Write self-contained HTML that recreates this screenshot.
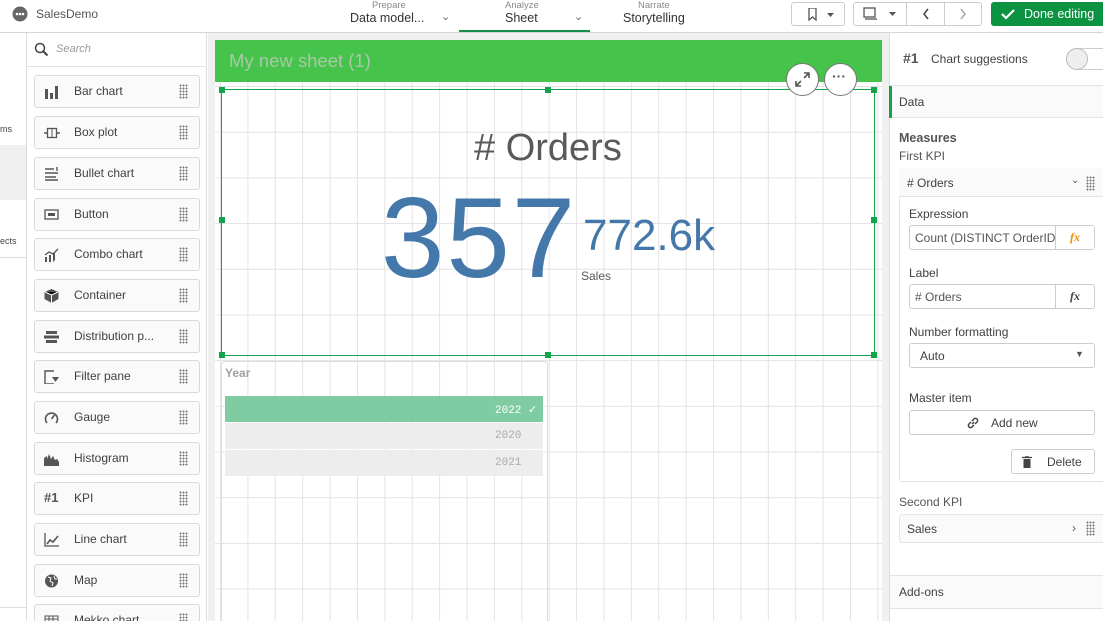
<!DOCTYPE html>
<html><head><meta charset="utf-8"><style>
*{box-sizing:border-box;margin:0;padding:0}
html{width:1103px;height:621px;overflow:hidden}
body{width:1103px;height:621px;overflow:hidden;position:relative;background:#fff;font-family:"Liberation Sans",sans-serif;color:#404040}
.a{position:absolute}
.hdr{left:0;top:0;width:1103px;height:33px;border-bottom:1px solid #d6d6d6;background:#fff}
.item{position:absolute;left:34px;width:166px;height:33px;border:1px solid #d9d9d9;border-radius:3px;background:#fafafa;font-size:12px;color:#404040}
.item span.l{position:absolute;left:39px;top:8px}
.item .ic{position:absolute;left:9px;top:9px;width:16px;height:14px}
.item .dr{position:absolute;right:11px;top:8px;width:9px;height:15px;background-image:radial-gradient(circle,#777 0.9px,transparent 1.1px);background-size:3px 3px}
.grid{left:215px;top:82px;width:667px;height:539px;background-color:#fff;background-image:linear-gradient(90deg,#e3e3e3 1px,transparent 1px),linear-gradient(#e3e3e3 1px,transparent 1px);background-size:27.4px 45.7px;background-position:5px 4px}
.h{position:absolute;width:6px;height:6px;background:#10a54a}
.lbl{font-size:12px;color:#404040;position:absolute}
.box{position:absolute;border:1px solid #ccc;border-radius:3px;background:#fff;font-size:12px}
</style></head><body>
<div class="a hdr">
 <svg class="a" style="left:12px;top:6px" width="16" height="16"><circle cx="8" cy="8" r="7.5" fill="#666"/><circle cx="5" cy="8" r="1.3" fill="#fff"/><circle cx="8" cy="8" r="1.3" fill="#fff"/><circle cx="11" cy="8" r="1.3" fill="#fff"/></svg>
 <div class="a" style="left:36px;top:7px;font-size:12px;color:#555">SalesDemo</div>
 <div class="a" style="left:372px;top:0;font-size:9.5px;color:#888">Prepare</div>
 <div class="a" style="left:350px;top:11px;font-size:12.5px;color:#333">Data model...</div>
 <div class="a" style="left:441px;top:10px;font-size:11px;color:#666">⌄</div>
 <div class="a" style="left:505px;top:0;font-size:9.5px;color:#888">Analyze</div>
 <div class="a" style="left:505px;top:11px;font-size:12.5px;color:#333">Sheet</div>
 <div class="a" style="left:574px;top:10px;font-size:11px;color:#666">⌄</div>
 <div class="a" style="left:459px;top:30px;width:131px;height:2px;background:#148f47"></div>
 <div class="a" style="left:638px;top:0;font-size:9.5px;color:#888">Narrate</div>
 <div class="a" style="left:623px;top:11px;font-size:12.5px;color:#333">Storytelling</div>
 <div class="a" style="left:791px;top:2px;width:54px;height:24px;border:1px solid #ccc;border-radius:3px"></div>
 <svg class="a" style="left:808px;top:8px" width="30" height="13"><path d="M1 0h7v12l-3.5-3-3.5 3z" fill="none" stroke="#555" stroke-width="1.3"/><path d="M19 5h7l-3.5 4z" fill="#555"/></svg>
 <div class="a" style="left:853px;top:2px;width:129px;height:24px;border:1px solid #ccc;border-radius:3px"></div>
 <div class="a" style="left:906px;top:2px;width:1px;height:24px;background:#ccc"></div>
 <div class="a" style="left:944px;top:2px;width:1px;height:24px;background:#ccc"></div>
 <svg class="a" style="left:863px;top:7px" width="110" height="14"><rect x="1" y="1" width="11" height="9" fill="none" stroke="#555" stroke-width="1.3"/><path d="M2 12h12" stroke="#555" stroke-width="1.3"/><path d="M26 5h7l-3.5 4z" fill="#555"/><path d="M65 2l-4 5 4 5" fill="none" stroke="#444" stroke-width="1.5"/><path d="M98 2l4 5-4 5" fill="none" stroke="#aaa" stroke-width="1.5"/></svg>
 <div class="a" style="left:991px;top:2px;width:112px;height:24px;background:#0b9341;border-radius:3px 0 0 3px;color:#fff;font-size:12.5px;padding:5px 0 0 33px">Done editing</div>
 <svg class="a" style="left:1001px;top:8px" width="14" height="12"><path d="M1 6l4 4 8-8" fill="none" stroke="#fff" stroke-width="2.2"/></svg>
</div>
<div class="a" style="left:0;top:33px;width:27px;height:588px;border-right:1px solid #ddd;background:#fff"></div>
<div class="a" style="left:0;top:145px;width:26px;height:55px;background:#f0f0f0"></div>
<div class="a" style="left:0;top:124px;font-size:9px;color:#444">ms</div>
<div class="a" style="left:0;top:236px;font-size:9px;color:#444">ects</div>
<div class="a" style="left:0;top:257px;width:26px;height:1px;background:#ddd"></div>
<div class="a" style="left:0;top:607px;width:26px;height:1px;background:#ddd"></div>
<div class="a" style="left:27px;top:33px;width:180px;height:588px;background:#fff;border-right:1px solid #ddd;overflow:hidden"></div>
<div class="a" style="left:27px;top:66px;width:180px;height:1px;background:#e3e3e3"></div>
<svg class="a" style="left:34px;top:42px" width="16" height="16"><circle cx="6" cy="6" r="4.5" fill="none" stroke="#444" stroke-width="1.5"/><path d="M9.5 9.5l4 4" stroke="#444" stroke-width="2"/></svg>
<div class="a" style="left:56px;top:43px;font-size:11px;font-style:italic;color:#999">Search</div>
<div class="item" style="top:75px"><svg class="ic"><rect x="1" y="4" width="3" height="10" fill="#555"/><rect x="6" y="8" width="3" height="6" fill="#555"/><rect x="11" y="1" width="3" height="13" fill="#555"/></svg><span class="l">Bar chart</span><i class="dr"></i></div>
<div class="item" style="top:116px"><svg class="ic"><path d="M0 7h3M13 7h3" stroke="#555" stroke-width="1.5"/><rect x="3.5" y="2.5" width="9" height="9" fill="none" stroke="#555" stroke-width="1.3"/><path d="M8 2v10" stroke="#555"/></svg><span class="l">Box plot</span><i class="dr"></i></div>
<div class="item" style="top:157px"><svg class="ic"><path d="M1 2h9M1 6h13M1 10h11M1 13h13M13 0v4" stroke="#555" stroke-width="1.4"/></svg><span class="l">Bullet chart</span><i class="dr"></i></div>
<div class="item" style="top:198px"><svg class="ic"><rect x="1" y="2" width="13" height="9" fill="none" stroke="#555" stroke-width="1.3"/><rect x="4" y="5" width="7" height="3" fill="#555"/></svg><span class="l">Button</span><i class="dr"></i></div>
<div class="item" style="top:238px"><svg class="ic"><path d="M1 14V9h2v5M5 14V7h2v7M9 14V5h2v7" fill="#555"/><path d="M1 7l4-3 4 2 5-5" fill="none" stroke="#555" stroke-width="1.3"/></svg><span class="l">Combo chart</span><i class="dr"></i></div>
<div class="item" style="top:279px"><svg class="ic"><path d="M7.5 0l7 3v7l-7 4-7-4V3z" fill="#555"/><path d="M1 3l6.5 3 6.5-3M7.5 6v8" stroke="#fff" stroke-width="1"/></svg><span class="l">Container</span><i class="dr"></i></div>
<div class="item" style="top:320px"><svg class="ic"><rect x="2" y="1" width="11" height="3" fill="#555"/><rect x="0" y="5.5" width="15" height="3" fill="#555"/><rect x="2" y="10" width="11" height="3" fill="#555"/></svg><span class="l">Distribution p...</span><i class="dr"></i></div>
<div class="item" style="top:360px"><svg class="ic"><path d="M10 1H1v13h9" fill="none" stroke="#555" stroke-width="1.4"/><path d="M8 7h7l-3.5 5z" fill="#555"/></svg><span class="l">Filter pane</span><i class="dr"></i></div>
<div class="item" style="top:401px"><svg class="ic"><path d="M3 12A6 6 0 1 1 12 12" fill="none" stroke="#555" stroke-width="1.6"/><path d="M7.5 8l3-4" stroke="#555" stroke-width="1.6"/></svg><span class="l">Gauge</span><i class="dr"></i></div>
<div class="item" style="top:442px"><svg class="ic"><path d="M0 14V6l3-2v3l2-5 2 5 2-3 2 4 2-1 2 3v4z" fill="#555"/></svg><span class="l">Histogram</span><i class="dr"></i></div>
<div class="item" style="top:482px"><span class="a" style="left:9px;top:7px;font-size:13px;font-weight:bold;color:#555">#1</span><span class="l">KPI</span><i class="dr"></i></div>
<div class="item" style="top:523px"><svg class="ic"><path d="M1 0v13h14" fill="none" stroke="#555" stroke-width="1.3"/><path d="M3 11l3-4 3 2 5-6" fill="none" stroke="#555" stroke-width="1.6"/></svg><span class="l">Line chart</span><i class="dr"></i></div>
<div class="item" style="top:564px"><svg class="ic"><circle cx="7.5" cy="7" r="6.5" fill="#555"/><path d="M4 3l3 1-1 3 3 2-1 3M10 2l1 3 2 0" stroke="#fff" stroke-width="1" fill="none"/></svg><span class="l">Map</span><i class="dr"></i></div>
<div class="item" style="top:604px"><svg class="ic"><rect x="1" y="2" width="13" height="11" fill="none" stroke="#555"/><path d="M1 5h13M5 2v11M9 2v11" stroke="#555"/></svg><span class="l">Mekko chart</span><i class="dr"></i></div>
<div class="a" style="left:208px;top:33px;width:681px;height:588px;background:#f0f0f0"></div>
<div class="a" style="left:215px;top:40px;width:667px;height:42px;background:#46c34a"></div>
<div class="a" style="left:229px;top:50px;font-size:18.5px;color:#a9c9a6">My new sheet (1)</div>
<div class="a grid"></div>
<div class="a" style="left:221px;top:89px;width:654px;height:267px;border:1.5px solid #10a54a"></div>
<div class="h" style="left:219px;top:87px"></div><div class="h" style="left:545px;top:87px"></div><div class="h" style="left:871px;top:87px"></div>
<div class="h" style="left:219px;top:217px"></div><div class="h" style="left:871px;top:217px"></div>
<div class="h" style="left:219px;top:352px"></div><div class="h" style="left:545px;top:352px"></div><div class="h" style="left:871px;top:352px"></div>
<div class="a" style="left:786px;top:63px;width:33px;height:33px;border-radius:50%;background:#fff;border:1px solid #777"></div>
<svg class="a" style="left:794px;top:71px" width="17" height="17"><path d="M10 2h5v5M15 2l-5 5M7 15H2v-5M2 15l5-5" fill="none" stroke="#555" stroke-width="1.6"/></svg>
<div class="a" style="left:824px;top:63px;width:33px;height:33px;border-radius:50%;background:#fff;border:1px solid #777"></div>
<div class="a" style="left:832px;top:68px;font-size:14px;font-weight:bold;color:#555">···</div>
<div class="a" style="left:474px;top:127px;font-size:38px;color:#595959">#&nbsp;Orders</div>
<div class="a" style="left:381px;top:182px;font-size:114px;color:#4477aa;line-height:1;letter-spacing:2px">357</div>
<div class="a" style="left:583px;top:214px;font-size:44px;color:#4477aa;line-height:1">772.6k</div>
<div class="a" style="left:581px;top:269px;font-size:12px;color:#595959">Sales</div>
<div class="a" style="left:221px;top:361px;width:327px;height:262px;border:1px solid #ddd;border-radius:4px"></div>
<div class="a" style="left:225px;top:366px;font-size:12px;font-weight:bold;color:#a0a0a0">Year</div>
<div class="a" style="left:225px;top:396px;width:318px;height:26px;background:#80cca2"></div>
<div class="a" style="left:495px;top:403px;font-size:11px;color:#fff;font-family:'Liberation Mono',monospace">2022 ✓</div>
<div class="a" style="left:225px;top:423px;width:318px;height:26px;background:#ededed"></div>
<div class="a" style="left:495px;top:430px;font-size:11px;color:#aaa;font-family:'Liberation Mono',monospace">2020</div>
<div class="a" style="left:225px;top:450px;width:318px;height:26px;background:#ededed"></div>
<div class="a" style="left:495px;top:457px;font-size:11px;color:#aaa;font-family:'Liberation Mono',monospace">2021</div>
<div class="a" style="left:889px;top:33px;width:214px;height:588px;background:#fff;border-left:1px solid #ddd"></div>
<div class="a" style="left:903px;top:50px;font-size:14px;font-weight:bold;color:#555">#1</div>
<div class="a" style="left:931px;top:52px;font-size:12px;color:#404040">Chart suggestions</div>
<div class="a" style="left:1066px;top:48px;width:50px;height:22px;border-radius:11px;background:#fff;border:1px solid #ccc"></div>
<div class="a" style="left:1066px;top:48px;width:22px;height:22px;border-radius:50%;background:#eee;border:1px solid #bbb"></div>
<div class="a" style="left:890px;top:85px;width:213px;height:1px;background:#e3e3e3"></div>
<div class="a" style="left:890px;top:86px;width:213px;height:32px;background:#fafafa;border-bottom:1px solid #e3e3e3"></div>
<div class="a" style="left:889px;top:86px;width:3px;height:32px;background:#10a54a"></div>
<div class="a" style="left:899px;top:95px;font-size:12px">Data</div>
<div class="a" style="left:899px;top:131px;font-size:12.5px;font-weight:bold;color:#555">Measures</div>
<div class="a" style="left:899px;top:149px;font-size:12px;color:#555">First KPI</div>
<div class="a" style="left:899px;top:168px;width:210px;height:314px;border:1px solid #e3e3e3;border-radius:3px;background:#fff"></div>
<div class="a" style="left:899px;top:168px;width:210px;height:29px;border-bottom:1px solid #e3e3e3;background:#fafafa"></div>
<div class="a" style="left:907px;top:176px;font-size:12px">#&nbsp;Orders</div>
<div class="a" style="left:1071px;top:175px;font-size:10px;color:#555">⌄</div>
<div class="a" style="left:1086px;top:176px;width:9px;height:15px;background-image:radial-gradient(circle,#777 0.9px,transparent 1.1px);background-size:3px 3px"></div>
<div class="lbl" style="left:909px;top:207px">Expression</div>
<div class="box" style="left:909px;top:225px;width:186px;height:25px"><span class="a" style="left:5px;top:5px;color:#555">Count (DISTINCT OrderID</span></div>
<div class="a" style="left:1055px;top:226px;width:39px;height:23px;border-left:1px solid #ccc;background:#fff;color:#f08c00;font-style:italic;font-weight:bold;font-size:12px;text-align:center;padding-top:4px;font-family:'Liberation Serif',serif">fx</div>
<div class="lbl" style="left:909px;top:266px">Label</div>
<div class="box" style="left:909px;top:284px;width:186px;height:25px"><span class="a" style="left:5px;top:5px;color:#555">#&nbsp;Orders</span></div>
<div class="a" style="left:1055px;top:285px;width:39px;height:23px;border-left:1px solid #ccc;color:#444;font-style:italic;font-weight:bold;font-size:12px;text-align:center;padding-top:4px;font-family:'Liberation Serif',serif">fx</div>
<div class="lbl" style="left:909px;top:325px">Number formatting</div>
<div class="box" style="left:909px;top:343px;width:186px;height:25px"><span class="a" style="left:10px;top:5px;color:#404040">Auto</span><span class="a" style="left:165px;top:5px;font-size:9px;color:#555">▼</span></div>
<div class="lbl" style="left:909px;top:391px">Master item</div>
<div class="box" style="left:909px;top:410px;width:186px;height:25px"><svg class="a" style="left:56px;top:5px" width="14" height="14"><path d="M6 8l2-2M5 6L3 8a2 2 0 0 0 3 3l2-2M9 8l2-2a2 2 0 0 0-3-3L6 5" fill="none" stroke="#444" stroke-width="1.5"/></svg><span class="a" style="left:81px;top:5px">Add new</span></div>
<div class="box" style="left:1011px;top:449px;width:84px;height:25px"><svg class="a" style="left:10px;top:6px" width="10" height="12"><path d="M0 1.5h10M3 0h4" stroke="#444" stroke-width="1.3"/><rect x="1.5" y="3" width="7" height="9" fill="#444"/></svg><span class="a" style="left:35px;top:5px">Delete</span></div>
<div class="lbl" style="left:899px;top:495px;color:#555">Second KPI</div>
<div class="a" style="left:899px;top:514px;width:210px;height:29px;border:1px solid #e3e3e3;border-radius:3px;background:#fafafa"></div>
<div class="a" style="left:907px;top:522px;font-size:12px">Sales</div>
<div class="a" style="left:1072px;top:521px;font-size:12px;color:#555">›</div>
<div class="a" style="left:1086px;top:521px;width:9px;height:15px;background-image:radial-gradient(circle,#777 0.9px,transparent 1.1px);background-size:3px 3px"></div>
<div class="a" style="left:890px;top:575px;width:213px;height:34px;background:#fafafa;border-top:1px solid #e3e3e3;border-bottom:1px solid #e3e3e3"></div>
<div class="a" style="left:899px;top:585px;font-size:12px">Add-ons</div>
</body></html>
